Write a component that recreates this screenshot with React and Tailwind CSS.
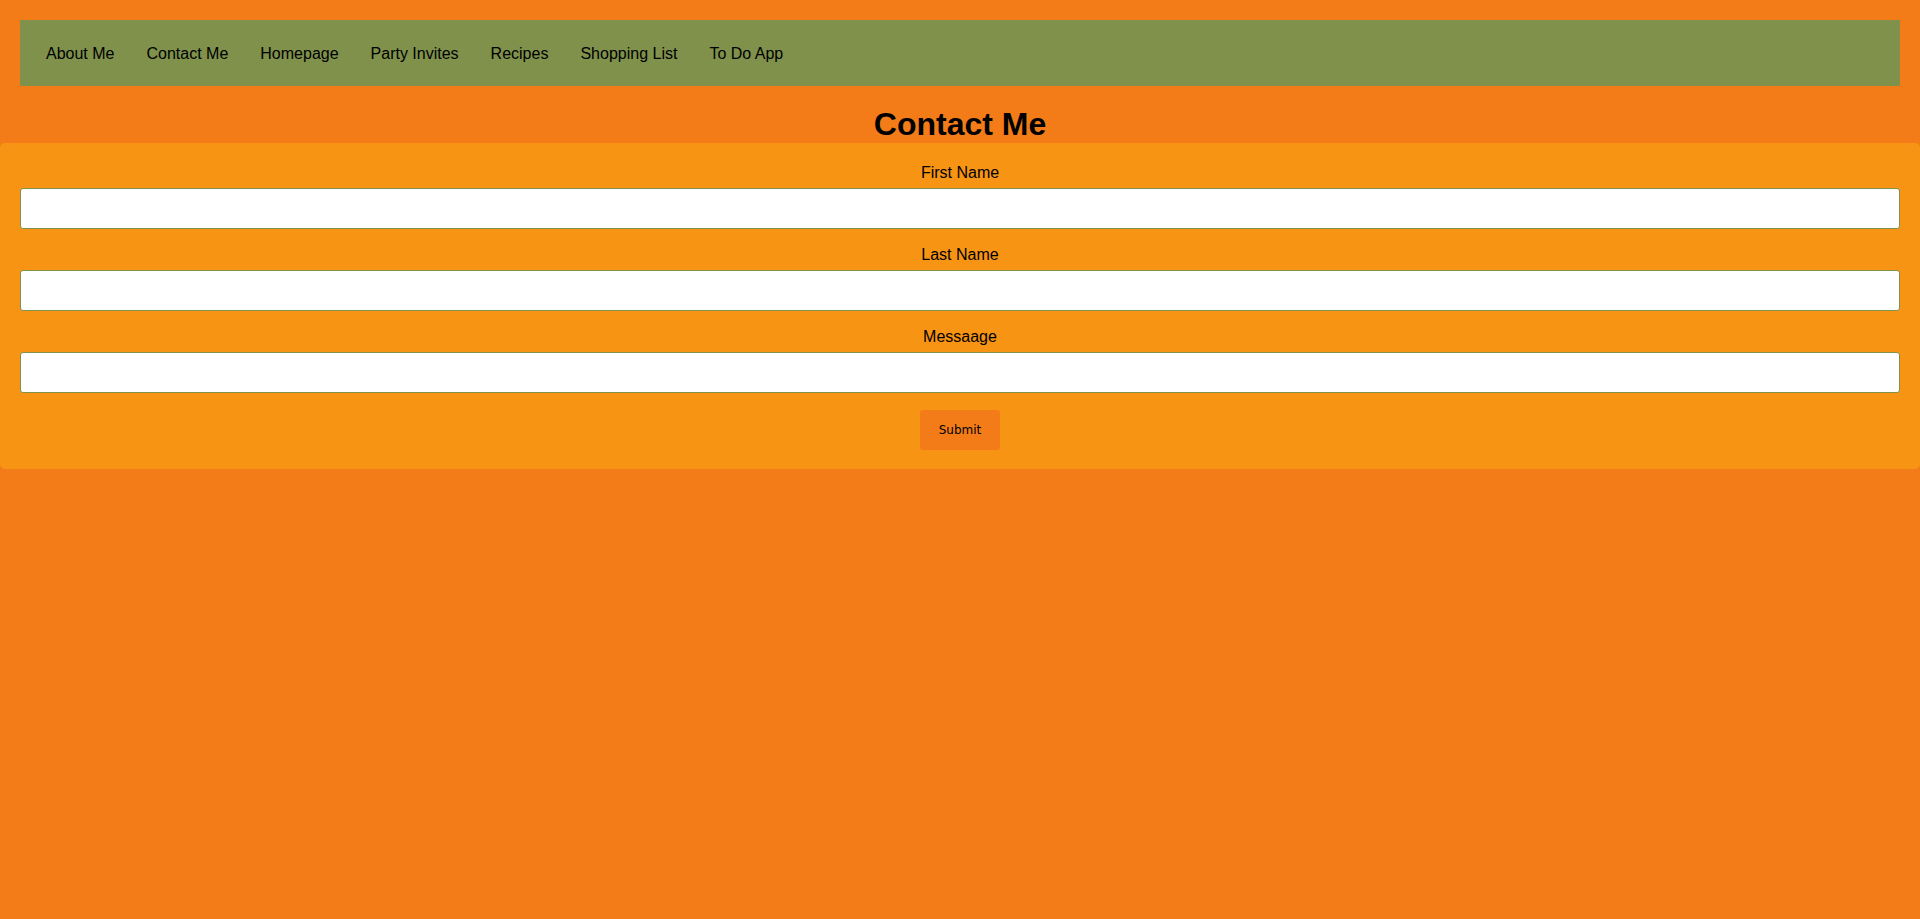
import { useState } from "react";

const links = [
  "About Me",
  "Contact Me",
  "Homepage",
  "Party Invites",
  "Recipes",
  "Shopping List",
  "To Do App",
];

export default function App() {
  const [form, setForm] = useState({ first: "", last: "", message: "" });

  const update = (key) => (e) => setForm({ ...form, [key]: e.target.value });

  return (
    <div className="min-h-screen bg-[#f47c18] text-black font-['Liberation_Sans',Arial,sans-serif] pt-5">
      {/* Navigation */}
      <nav className="mx-5 h-[66px] bg-[#7f914b] flex items-center pl-[26px] pt-[2px] gap-[32px]">
        {links.map((l) => (
          <a key={l} href="#" className="text-[16px] leading-[18px] text-black">
            {l}
          </a>
        ))}
      </nav>

      <h1 className="mt-5 text-[32px] leading-[37px] font-bold text-center">Contact Me</h1>

      {/* Form */}
      <form
        onSubmit={(e) => e.preventDefault()}
        className="bg-[#f79414] rounded-[5px] px-5 pt-[21px] pb-[19px] flex flex-col"
      >
        <label className="text-center text-[16px] leading-[18px]">First Name</label>
        <input
          value={form.first}
          onChange={update("first")}
          className="mt-[6px] h-[41px] w-full bg-white border border-[#7f914b] rounded-[3px] px-2"
        />

        <label className="mt-[17px] text-center text-[16px] leading-[18px]">Last Name</label>
        <input
          value={form.last}
          onChange={update("last")}
          className="mt-[6px] h-[41px] w-full bg-white border border-[#7f914b] rounded-[3px] px-2"
        />

        <label className="mt-[17px] text-center text-[16px] leading-[18px]">Messaage</label>
        <input
          value={form.message}
          onChange={update("message")}
          className="mt-[6px] h-[41px] w-full bg-white border border-[#7f914b] rounded-[3px] px-2"
        />

        <div className="flex justify-center mt-[17px]">
          <button
            type="submit"
            className="w-[80px] h-[40px] bg-[#f47c18] rounded-[3px] text-[12px] font-['DejaVu_Sans',Verdana,sans-serif]"
          >
            Submit
          </button>
        </div>
      </form>
    </div>
  );
}
